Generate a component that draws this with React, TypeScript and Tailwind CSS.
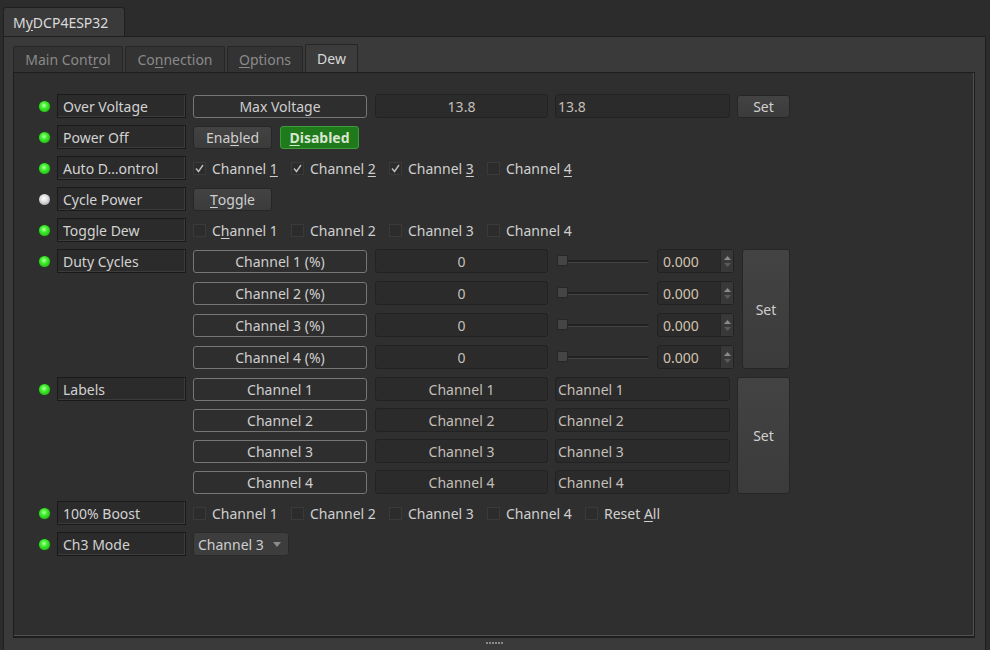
import React from "react";

const font = { fontFamily: '"Noto Sans", "Open Sans", sans-serif' };

function Led({ on = true }: { on?: boolean }) {
  return (
    <div className="w-[30px] flex justify-center">
      <div
        className={
          on
            ? "w-[11px] h-[11px] rounded-full bg-[radial-gradient(circle_at_45%_40%,#b8ffa8_0%,#3cf02a_35%,#1c9a12_100%)] shadow-[0_0_2px_#1a5a14]"
            : "w-[11px] h-[11px] rounded-full bg-[radial-gradient(circle_at_45%_40%,#ffffff_0%,#e0e0e0_40%,#8a8a8a_100%)]"
        }
      />
    </div>
  );
}

function Label({ children }: { children: React.ReactNode }) {
  return (
    <div className="w-[129px] h-[24px] ml-[-2px] mr-[7px] bg-[#2b2b2b] border border-[#1a1a1a] shadow-[inset_-1px_-1px_0_#3c3c3c] flex items-center pl-[5px] text-[#d2d2d2] whitespace-nowrap overflow-hidden">
      {children}
    </div>
  );
}

function OutlineBox({ children, w = "w-[174px]" }: { children: React.ReactNode; w?: string }) {
  return (
    <div className={`${w} h-[23px] border border-[#767676] rounded-[3px] bg-[#2e2e2e] flex items-center justify-center text-[#cfcfcf]`}>
      {children}
    </div>
  );
}

function Field({ children, center = false, w }: { children: React.ReactNode; center?: boolean; w: string }) {
  return (
    <div
      className={`${w} h-[24px] border border-[#222] rounded-[3px] bg-[#2b2b2b] flex items-center text-[#c4bfb8] ${
        center ? "justify-center" : "pl-[2px]"
      }`}
    >
      {children}
    </div>
  );
}

function Btn({ children, w, h = "h-[23px]", green = false }: { children: React.ReactNode; w: string; h?: string; green?: boolean }) {
  return (
    <div
      className={
        green
          ? `${w} ${h} rounded-[3px] border border-[#3e9a3a] bg-[#1f7a1c] flex items-center justify-center text-[#d8e6cf] font-bold`
          : `${w} ${h} rounded-[3px] border border-[#262626] bg-gradient-to-b from-[#434343] to-[#3b3b3b] flex items-center justify-center text-[#cfcfcf]`
      }
    >
      {children}
    </div>
  );
}

function Check({ checked = false, children }: { checked?: boolean; children: React.ReactNode }) {
  return (
    <div className="w-[98px] flex items-center gap-[6px] text-[#cfcfcf] whitespace-nowrap">
      <div className="w-[13px] h-[13px] border border-[#3a3a3a] bg-[#2c2c2c] flex items-center justify-center text-[#bdbdbd]">
        {checked ? (
          <svg width="9" height="9" viewBox="0 0 9 9">
            <path d="M1 4.5L3.5 7.5L8 1" fill="none" stroke="#bdbdbd" strokeWidth="1.4" />
          </svg>
        ) : null}
      </div>
      <span>{children}</span>
    </div>
  );
}

function Row({ children, top }: { children: React.ReactNode; top: string }) {
  return <div className={`flex items-center h-[24px] ${top}`}>{children}</div>;
}

function Slider() {
  return (
    <div className="w-[92px] h-[12px] ml-[9px] mr-[8px] relative flex items-center">
      <div className="w-full h-[3px] bg-[#222] border-b border-[#444] rounded" />
      <div className="absolute left-0 top-0 w-[11px] h-[11px] rounded-[2px] bg-[#454545] border border-[#262626]" />
    </div>
  );
}

function Spin() {
  return (
    <div className="w-[77px] h-[24px] border border-[#222] rounded-[3px] bg-[#2b2b2b] flex">
      <div className="flex-1 flex items-center pl-[5px] text-[#d2c2ad]">0.000</div>
      <div className="w-[13px] bg-[#383838] border-l border-[#262626] flex flex-col items-center justify-center gap-[3px]">
        <svg width="7" height="4" viewBox="0 0 7 4"><path d="M0 4L3.5 0L7 4Z" fill="#8a8a8a" /></svg>
        <svg width="7" height="4" viewBox="0 0 7 4"><path d="M0 0L3.5 4L7 0Z" fill="#5a5a5a" /></svg>
      </div>
    </div>
  );
}

export default function App() {
  return (
    <div style={font} className="w-[990px] h-[650px] bg-[#2c2c2c] text-[14px] overflow-hidden flex flex-col">
      <div className="pl-[3px] pt-[7px] flex">
        <div className="w-[122px] h-[29px] bg-[#3a3a3a] border border-b-0 border-[#1f1f1f] rounded-t-[3px] flex items-center pl-[9px] text-[#dadada]">
          M<u className="underline-offset-2">y</u>DCP4ESP32
        </div>
      </div>
      <div className="mx-[3px] mr-[4px] flex-1 bg-[#3a3a3a] border border-[#1f1f1f] border-b-0 flex flex-col pl-[9px] pr-[10px] pt-[7px]">
        <div className="flex items-end h-[28px] gap-[2px]">
          <div className="w-[110px] h-[26px] bg-[#333] border border-b-0 border-[#262626] rounded-t-[2px] flex items-center justify-center text-[#8a8a8a]">
            Main Cont<u className="underline-offset-2">r</u>ol
          </div>
          <div className="w-[100px] h-[26px] bg-[#333] border border-b-0 border-[#262626] rounded-t-[2px] flex items-center justify-center text-[#8a8a8a]">
            Co<u className="underline-offset-2">n</u>nection
          </div>
          <div className="w-[76px] h-[26px] bg-[#333] border border-b-0 border-[#262626] rounded-t-[2px] flex items-center justify-center text-[#8a8a8a]">
            <u className="underline-offset-2">O</u>ptions
          </div>
          <div className="w-[53px] h-[28px] bg-[#3c3c3c] border border-b-0 border-[#262626] rounded-t-[2px] flex items-center justify-center text-[#d8d8d8]">
            Dew
          </div>
        </div>
        <div className="h-[566px] bg-[#2f2f2f] border border-[#1e1e1e] border-b-2 shadow-[inset_-1px_-1px_0_#505050] flex flex-col pl-[15px]">
          <Row top="mt-[21px]">
            <Led />
            <Label>Over Voltage</Label>
            <OutlineBox>Max Voltage</OutlineBox>
            <div className="w-[8px]" />
            <Field center w="w-[173px]">13.8</Field>
            <div className="w-[7px]" />
            <Field w="w-[175px]">13.8</Field>
            <div className="w-[7px]" />
            <Btn w="w-[53px]">Set</Btn>
          </Row>
          <Row top="mt-[7px]">
            <Led />
            <Label>Power Off</Label>
            <Btn w="w-[79px]">
              Ena<u className="underline-offset-2">b</u>led
            </Btn>
            <div className="w-[8px]" />
            <Btn w="w-[79px]" green>
              <u className="underline-offset-2">D</u>isabled
            </Btn>
          </Row>
          <Row top="mt-[7px]">
            <Led />
            <Label>Auto D…ontrol</Label>
            <Check checked>
              Channel <u className="underline-offset-2">1</u>
            </Check>
            <Check checked>
              Channel <u className="underline-offset-2">2</u>
            </Check>
            <Check checked>
              Channel <u className="underline-offset-2">3</u>
            </Check>
            <Check>
              Channel <u className="underline-offset-2">4</u>
            </Check>
          </Row>
          <Row top="mt-[7px]">
            <Led on={false} />
            <Label>Cycle Power</Label>
            <Btn w="w-[79px]">
              <u className="underline-offset-2">T</u>oggle
            </Btn>
          </Row>
          <Row top="mt-[7px]">
            <Led />
            <Label>Toggle Dew</Label>
            <Check>
              C<u className="underline-offset-2">h</u>annel 1
            </Check>
            <Check>Channel 2</Check>
            <Check>Channel 3</Check>
            <Check>Channel 4</Check>
          </Row>

          <div className="flex mt-[7px]">
            <div className="flex flex-col">
              {[1, 2, 3, 4].map((n) => (
                <div key={n} className={`flex items-center h-[24px] ${n > 1 ? "mt-[8px]" : ""}`}>
                  {n === 1 ? (
                    <>
                      <Led />
                      <Label>Duty Cycles</Label>
                    </>
                  ) : (
                    <div className="w-[164px]" />
                  )}
                  <OutlineBox>Channel {n} (%)</OutlineBox>
                  <div className="w-[8px]" />
                  <Field center w="w-[173px]">0</Field>
                  <Slider />
                  <Spin />
                </div>
              ))}
            </div>
            <div className="ml-[8px]">
              <Btn w="w-[48px]" h="h-[120px]">Set</Btn>
            </div>
          </div>

          <div className="flex mt-[8px]">
            <div className="flex flex-col">
              {[1, 2, 3, 4].map((n) => (
                <div key={n} className={`flex items-center h-[24px] ${n > 1 ? "mt-[7px]" : ""}`}>
                  {n === 1 ? (
                    <>
                      <Led />
                      <Label>Labels</Label>
                    </>
                  ) : (
                    <div className="w-[164px]" />
                  )}
                  <OutlineBox>Channel {n}</OutlineBox>
                  <div className="w-[8px]" />
                  <Field center w="w-[173px]">Channel {n}</Field>
                  <div className="w-[7px]" />
                  <Field w="w-[175px]">Channel {n}</Field>
                </div>
              ))}
            </div>
            <div className="ml-[7px]">
              <Btn w="w-[53px]" h="h-[117px]">Set</Btn>
            </div>
          </div>

          <Row top="mt-[7px]">
            <Led />
            <Label>100% Boost</Label>
            <Check>Channel 1</Check>
            <Check>Channel 2</Check>
            <Check>Channel 3</Check>
            <Check>Channel 4</Check>
            <Check>
              Reset <u className="underline-offset-2">A</u>ll
            </Check>
          </Row>
          <Row top="mt-[7px]">
            <Led />
            <Label>Ch3 Mode</Label>
            <div className="w-[96px] h-[24px] rounded-[3px] border border-[#2a2a2a] bg-[#3d3d3d] flex items-center pl-[4px] text-[#cfcfcf]">
              <span className="flex-1">Channel 3</span>
              <svg width="8" height="5" viewBox="0 0 8 5" className="mr-[7px]">
                <path d="M0 0L4 5L8 0Z" fill="#8c8c8c" />
              </svg>
            </div>
          </Row>
        </div>
        <div className="flex justify-center pt-[4px]">
          <div className="flex gap-[1px]">
            {[0, 1, 2, 3, 4, 5].map((i) => (
              <div key={i} className="w-[2px] h-[2px] bg-[#8a8a8a]" />
            ))}
          </div>
        </div>
      </div>
    </div>
  );
}
